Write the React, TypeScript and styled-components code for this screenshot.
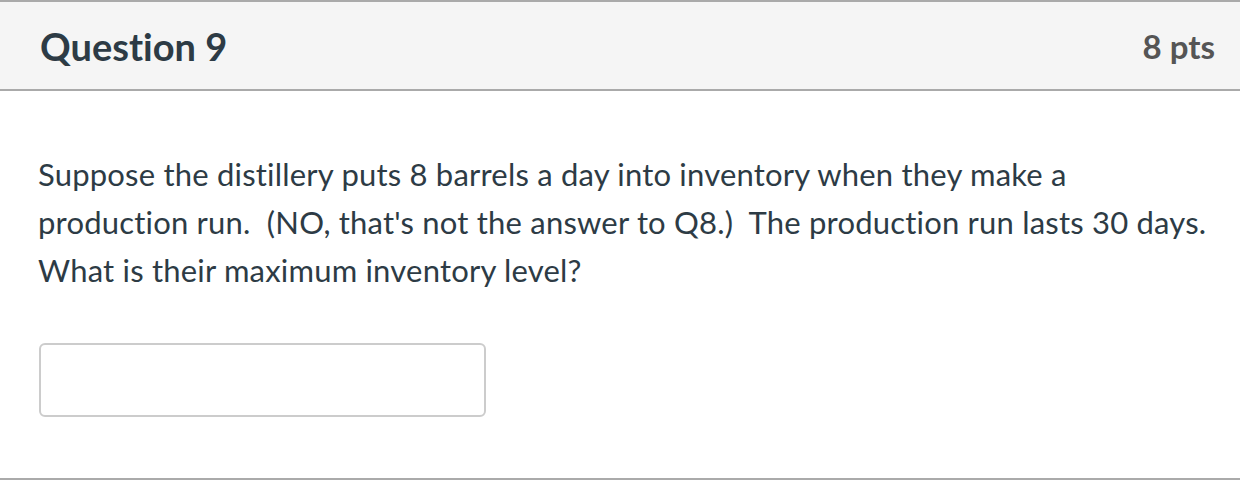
import styled, { createGlobalStyle } from 'styled-components'

const GlobalStyle = createGlobalStyle`
  html, body {
    margin: 0;
    padding: 0;
    background: #fff;
  }
  body {
    font-family: Lato, 'Liberation Sans', sans-serif;
    font-variant-ligatures: none;
    color: #2d3b45;
  }
`

const Card = styled.div`
  width: 1240px;
  border-top: 2px solid #aaaaaa;
  border-bottom: 2px solid #aaaaaa;
`

const Header = styled.div`
  display: flex;
  align-items: center;
  justify-content: space-between;
  height: 87px;
  padding: 0 25px 0 40px;
  background: #f5f5f5;
  border-bottom: 2px solid #aaaaaa;
`

const Title = styled.h2`
  margin: 0;
  font-size: 38px;
  font-weight: 700;
  color: #2d3b45;
`

const Points = styled.span`
  font-size: 33px;
  font-weight: 700;
  color: #555555;
`

const Body = styled.div`
  padding: 59px 28px 61px 38px;
`

const Text = styled.p`
  margin: 0 0 49px;
  font-size: 31px;
  line-height: 48px;
  letter-spacing: 0.2px;
`

const Answer = styled.input`
  display: block;
  box-sizing: border-box;
  width: 447px;
  height: 74px;
  margin-left: 1px;
  border: 2px solid #cccccc;
  border-radius: 6px;
  background: #fff;
  outline: none;
`

function App() {
  return (
    <>
      <GlobalStyle />
      <Card>
        <Header>
          <Title>Question 9</Title>
          <Points>8 pts</Points>
        </Header>
        <Body>
          <Text>
            Suppose the distillery puts 8 barrels a day into inventory when they make a production
            run.&nbsp; (NO, that's not the answer to Q8.)&nbsp; The production run lasts 30 days.
            What is their maximum inventory level?
          </Text>
          <Answer type="text" />
        </Body>
      </Card>
    </>
  )
}

export default App
